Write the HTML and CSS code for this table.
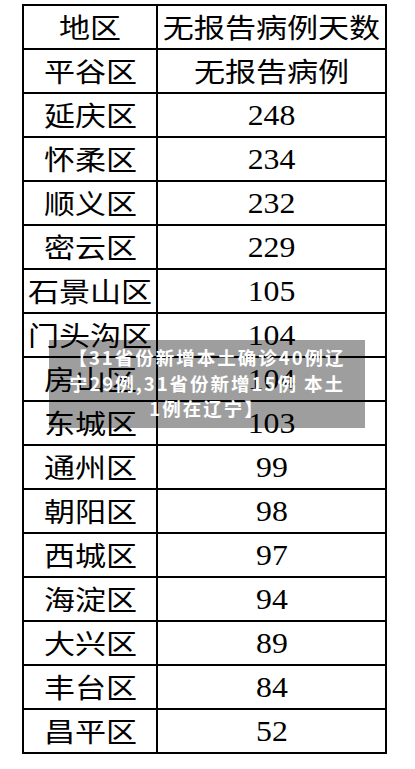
FILE: index.html
```html
<!DOCTYPE html>
<html lang="zh-CN">
<head>
<meta charset="utf-8">
<title>无报告病例天数</title>
<link rel="stylesheet" href="styles.css">
</head>
<body>
<div class="page">
  <div class="grid">
    <div class="cell"><span class="cjk">地区</span></div>
    <div class="cell"><span class="cjk">无报告病例天数</span></div>
    <div class="cell"><span class="cjk">平谷区</span></div>
    <div class="cell"><span class="cjk">无报告病例</span></div>
    <div class="cell"><span class="cjk">延庆区</span></div>
    <div class="cell"><span class="num">248</span></div>
    <div class="cell"><span class="cjk">怀柔区</span></div>
    <div class="cell"><span class="num">234</span></div>
    <div class="cell"><span class="cjk">顺义区</span></div>
    <div class="cell"><span class="num">232</span></div>
    <div class="cell"><span class="cjk">密云区</span></div>
    <div class="cell"><span class="num">229</span></div>
    <div class="cell"><span class="cjk">石景山区</span></div>
    <div class="cell"><span class="num">105</span></div>
    <div class="cell"><span class="cjk">门头沟区</span></div>
    <div class="cell"><span class="num">104</span></div>
    <div class="cell"><span class="cjk">房山区</span></div>
    <div class="cell"><span class="num">104</span></div>
    <div class="cell"><span class="cjk">东城区</span></div>
    <div class="cell"><span class="num">103</span></div>
    <div class="cell"><span class="cjk">通州区</span></div>
    <div class="cell"><span class="num">99</span></div>
    <div class="cell"><span class="cjk">朝阳区</span></div>
    <div class="cell"><span class="num">98</span></div>
    <div class="cell"><span class="cjk">西城区</span></div>
    <div class="cell"><span class="num">97</span></div>
    <div class="cell"><span class="cjk">海淀区</span></div>
    <div class="cell"><span class="num">94</span></div>
    <div class="cell"><span class="cjk">大兴区</span></div>
    <div class="cell"><span class="num">89</span></div>
    <div class="cell"><span class="cjk">丰台区</span></div>
    <div class="cell"><span class="num">84</span></div>
    <div class="cell"><span class="cjk">昌平区</span></div>
    <div class="cell"><span class="num">52</span></div>
  </div>
  <div class="caption">【31省份新增本土确诊40例辽<br>宁29例,31省份新增15例 本土<br>1例在辽宁】</div>
</div>
</body>
</html>
```

FILE: styles.css
```css
html, body {
  margin: 0;
  padding: 0;
  background: #fff;
}

.page {
  position: relative;
  width: 415px;
  height: 769px;
  padding-top: 4px;
  padding-left: 22px;
  box-sizing: border-box;
}

.grid {
  display: grid;
  grid-template-columns: 132px 227px;
  grid-auto-rows: 42px;
  gap: 2px;
  padding: 2px;
  background: #000;
  width: 365px;
  box-sizing: border-box;
}

.cell {
  background: #fff;
  display: flex;
  align-items: center;
  justify-content: center;
  color: #000;
  overflow: visible;
}

.cjk {
  display: inline-block;
  font-family: "Noto Sans CJK SC", "Noto Sans CJK JP", sans-serif;
  font-size: 27px;
  line-height: 30px;
  font-weight: 400;
  white-space: nowrap;
  transform: scaleX(1.15);
}

.num {
  display: inline-block;
  font-family: "Liberation Serif", "Times New Roman", serif;
  font-size: 30px;
  line-height: 30px;
  transform: scaleX(1.06);
}

.caption {
  position: absolute;
  left: 49px;
  top: 340px;
  width: 316px;
  height: 88px;
  box-sizing: border-box;
  padding-top: 5px;
  background: rgba(0, 0, 0, 0.38);
  color: #fff;
  font-family: "Noto Sans CJK SC", "Noto Sans CJK JP", sans-serif;
  font-weight: 700;
  font-size: 18.5px;
  line-height: 25.5px;
  letter-spacing: 2px;
  text-align: center;
  white-space: nowrap;
}
```
